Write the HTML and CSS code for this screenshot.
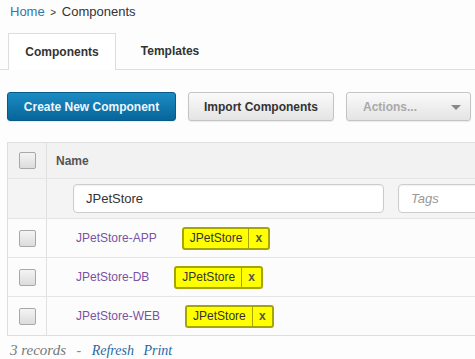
FILE: index.html
```html
<!DOCTYPE html>
<html lang="en">
<head>
  <meta charset="UTF-8">
  <title>Components</title>
  <link rel="stylesheet" href="styles.css">
</head>
<body>
  <div class="breadcrumb">
    <a href="#" class="crumb-link">Home</a>
    <span class="crumb-sep">&gt;</span>
    <span>Components</span>
  </div>

  <div class="tabs">
    <div class="tab active">Components</div>
    <div class="tab">Templates</div>
  </div>

  <div class="toolbar">
    <button class="btn btn-primary">Create New Component</button>
    <button class="btn btn-import">Import Components</button>
    <button class="btn btn-disabled">Actions...<span class="caret"></span></button>
  </div>

  <div class="grid">
    <div class="row head">
      <div class="cell check"><span class="box"></span></div>
      <div class="cell main">Name</div>
    </div>
    <div class="row filter">
      <div class="cell check"></div>
      <div class="cell main">
        <input class="field name-field" value="JPetStore">
        <input class="field tags-field" placeholder="Tags">
      </div>
    </div>
    <div class="row item">
      <div class="cell check"><span class="box"></span></div>
      <div class="cell main">
        <a href="#" class="name">JPetStore-APP</a>
        <span class="tag"><span class="tag-text">JPetStore</span><span class="tag-x">x</span></span>
      </div>
    </div>
    <div class="row item">
      <div class="cell check"><span class="box"></span></div>
      <div class="cell main">
        <a href="#" class="name">JPetStore-DB</a>
        <span class="tag"><span class="tag-text">JPetStore</span><span class="tag-x">x</span></span>
      </div>
    </div>
    <div class="row item">
      <div class="cell check"><span class="box"></span></div>
      <div class="cell main">
        <a href="#" class="name">JPetStore-WEB</a>
        <span class="tag"><span class="tag-text">JPetStore</span><span class="tag-x">x</span></span>
      </div>
    </div>
  </div>

  <div class="footer">
    <span class="count">3 records</span>
    <span class="dash">-</span>
    <a href="#">Refresh</a>
    <a href="#">Print</a>
  </div>
</body>
</html>
```

FILE: styles.css
```css
body {
  margin: 0;
  background: #fdfdfd;
  font-family: 'Liberation Sans', Arial, sans-serif;
  font-size: 13px;
  color: #333;
  overflow: hidden;
}
a {
  text-decoration: none;
}
.breadcrumb {
  height: 25px;
  padding: 4px 0 0 10px;
  box-sizing: border-box;
  color: #333;
}
.crumb-link {
  color: #2b78ac;
}
.crumb-sep {
  font-size: 10px;
  margin: 0 2px;
}
.tabs {
  display: flex;
  margin-top: 8px;
  padding-left: 8px;
  height: 36px;
  border-bottom: 1px solid #ddd;
}
.tab {
  width: 108px;
  box-sizing: border-box;
  text-align: center;
  line-height: 36px;
  font-size: 12px;
  font-weight: bold;
  color: #333;
}
.tab.active {
  background: #fff;
  border: 1px solid #ddd;
  border-bottom: none;
  height: 37px;
}
.toolbar {
  display: flex;
  gap: 12px;
  padding: 22px 0 0 7px;
}
.btn {
  height: 29px;
  padding: 0 16px;
  border: 1px solid #c4c4c4;
  border-radius: 3px;
  background: linear-gradient(#fafafa, #e4e4e4);
  font-family: inherit;
  font-size: 12px;
  font-weight: bold;
  color: #333;
  white-space: nowrap;
  box-shadow: 0 1px 1px rgba(0,0,0,0.08);
}
.btn-primary {
  width: 169px;
  padding: 0;
  background: linear-gradient(#1b8cc4, #07659a);
  border-color: #065b88;
  color: #eef6fb;
}
.btn-import {
  width: 146px;
  padding: 0;
}
.btn-disabled {
  width: 125px;
  text-align: left;
  color: #a9a9a9;
  position: relative;
}
.caret {
  position: absolute;
  right: 9px;
  top: 12px;
  border-left: 5px solid transparent;
  border-right: 5px solid transparent;
  border-top: 5px solid #888;
}
.grid {
  margin: 21px 0 0 7px;
  border: 1px solid #dedede;
  border-right: none;
}
.row {
  display: flex;
  border-top: 1px solid #e4e4e4;
}
.row:first-child {
  border-top: none;
}
.cell {
  display: flex;
  align-items: center;
  min-width: 0;
}
.check {
  width: 38px;
  justify-content: center;
  border-right: 1px solid #e0e0e0;
  flex-shrink: 0;
}
.main {
  flex: 1;
  padding-left: 9px;
}
.head {
  height: 35px;
  background: #f2f2f2;
  font-weight: bold;
  font-size: 12px;
  color: #555;
}
.filter {
  height: 39px;
  background: #f4f4f4;
}
.filter .main {
  padding-left: 26px;
  gap: 14px;
  overflow: hidden;
}
.field {
  height: 29px;
  box-sizing: border-box;
  border: 1px solid #ccc;
  border-radius: 4px;
  background: #fff;
  font-family: inherit;
  font-size: 13px;
  color: #333;
  padding: 0 12px;
  box-shadow: inset 0 1px 2px rgba(0,0,0,0.06);
}
.name-field {
  width: 311px;
  flex-shrink: 0;
}
.tags-field {
  width: 110px;
  flex-shrink: 0;
}
.tags-field::placeholder {
  font-style: italic;
  color: #999;
}
.item {
  height: 38px;
  background: #fcfcfc;
}
.item .main {
  padding-left: 29px;
}
.box {
  width: 17px;
  height: 17px;
  box-sizing: border-box;
  border: 1px solid #a8a8a8;
  border-radius: 2px;
  background: linear-gradient(#f4f4f4, #dcdcdc);
}
.name {
  color: #7b52a3;
  font-size: 12px;
  margin-right: 25px;
}
.tag {
  display: inline-flex;
  height: 23px;
  box-sizing: border-box;
  border: 2px solid #a6a600;
  border-radius: 3px;
  background: #ffff00;
  color: #333;
  font-size: 12px;
  line-height: 19px;
}
.tag-text {
  padding: 0 6px;
  border-right: 1px solid #a6a600;
}
.tag-x {
  width: 19px;
  text-align: center;
  font-weight: bold;
  font-size: 12px;
  color: #555;
}
.footer {
  padding: 6px 0 0 10px;
  font-family: 'Liberation Serif', 'Times New Roman', serif;
  font-style: italic;
  font-size: 14px;
}
.count {
  color: #777;
  font-size: 15px;
}
.dash {
  color: #888;
  margin: 0 7px;
}
.footer a {
  color: #1f6aa5;
  margin-right: 6px;
}
```
